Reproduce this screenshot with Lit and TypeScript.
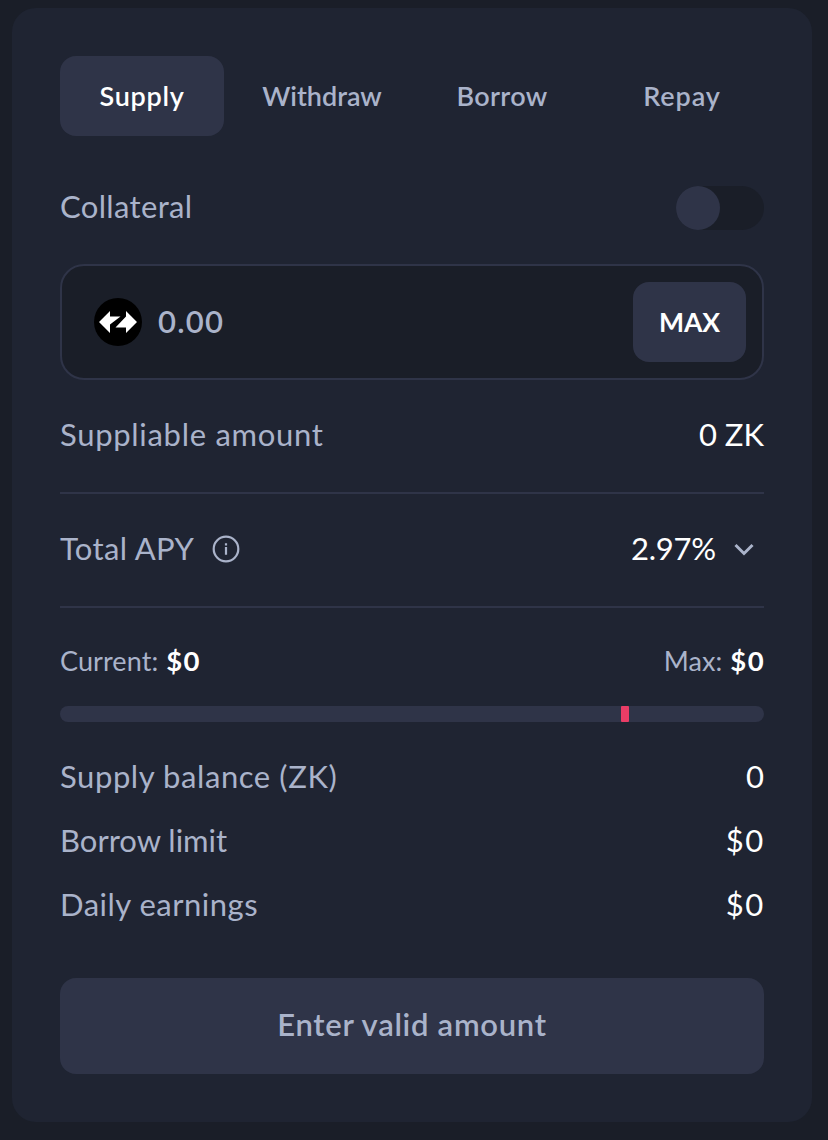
import { LitElement, html, css } from "lit";
import { customElement, state } from "lit/decorators.js";
import { classMap } from "lit/directives/class-map.js";

@customElement("app-root")
export class AppRoot extends LitElement {
  @state() private tab = "Supply";

  private tabs = [
    { name: "Supply", spacing: "wider" },
    { name: "Withdraw", spacing: "normal" },
    { name: "Borrow", spacing: "wide" },
    { name: "Repay", spacing: "widest" },
  ];

  static styles = css`
    :host {
      display: block;
      box-sizing: border-box;
      height: 1140px;
      padding: 8px 16px 18px 12px;
      background: #1a1e28;
      color: #fff;
      font-family: Lato, "Open Sans", sans-serif;
      font-size: 31px;
      line-height: 40px;
    }
    * { box-sizing: border-box; }
    button { font: inherit; color: inherit; border: 0; padding: 0; margin: 0; }
    .normal { letter-spacing: 0; }
    .wide { letter-spacing: 0.35px; }
    .medium { letter-spacing: 0.5px; }
    .wider { letter-spacing: 0.7px; }
    .widest { letter-spacing: 0.9px; }
    .card { height: 1114px; padding: 48px; border-radius: 24px; background: #1f2432; }
    .tabs { display: grid; grid-template-columns: repeat(4, 1fr); gap: 16px; }
    .tab { height: 80px; border-radius: 16px; background: none; color: #aab3ca; font-size: 27px; font-weight: 600; }
    .tab.active { background: #2f3448; color: #fff; }
    .row { display: flex; align-items: center; justify-content: space-between; white-space: nowrap; }
    .label { color: #aab3ca; }
    .collateral { height: 44px; margin-top: 50px; }
    .collateral .label { padding-bottom: 4px; }
    .toggle { width: 88px; height: 44px; border-radius: 22px; background: #1a1e28; }
    .knob { width: 44px; height: 44px; border-radius: 50%; background: #2f3448; }
    .field { display: flex; align-items: center; height: 116px; margin-top: 34px; padding: 0 16px 0 32px; border: 2px solid #2f3448; border-radius: 24px; background: #1a1e28; }
    .token { width: 48px; height: 48px; }
    .amount { flex: 1; margin-left: 16px; padding-bottom: 2px; color: #aab3ca; font-weight: 600; letter-spacing: 1.2px; }
    .max { width: 113px; height: 80px; border-radius: 16px; background: #2f3448; font-size: 26.500px; font-weight: 700; }
    .suppliable { height: 112px; padding-bottom: 4px; }
    .apy { height: 116px; padding-bottom: 4px; border: solid #2f3448; border-width: 2px 0; }
    .percent { letter-spacing: -0.2px; }
    .group { display: flex; align-items: center; }
    .info { width: 28px; height: 28px; margin: 2px 0 0 18px; }
    .chevron { width: 20px; height: 13px; margin: 2px 10px 0 18px; }
    .limits { height: 40px; margin-top: 33px; padding-bottom: 1px; font-size: 27px; }
    .limits .label { letter-spacing: 0.1px; }
    .limits b { margin: 0 -1px 0 1px; font-size: 27.500px; font-weight: 700; letter-spacing: 1.4px; }
    .bar { display: flex; height: 16px; margin-top: 25px; padding-left: 561px; border-radius: 8px; background: #2f3448; }
    .mark { width: 8px; height: 16px; border-radius: 1px; background: #e93d66; }
    .stats { display: grid; grid-auto-rows: 64px; margin-top: 22px; }
    .balance { letter-spacing: 0.58px; }
    .money { margin-right: -0.8px; letter-spacing: 1.6px; }
    .submit { display: block; width: 100%; height: 96px; margin-top: 42px; padding-bottom: 4px; border-radius: 16px; background: #2f3448; color: #aab3ca; font-weight: 600; }
  `;

  render() {
    return html`
      <main class="card">
        <nav class="tabs">
          ${this.tabs.map(
            (t) => html`<button class=${classMap({ tab: true, active: t.name === this.tab })} @click=${() => (this.tab = t.name)}><span class=${t.spacing}>${t.name}</span></button>`
          )}
        </nav>
        <div class="row collateral">
          <span class="label wide">Collateral</span>
          <div class="toggle"><div class="knob"></div></div>
        </div>
        <div class="field">
          <svg class="token" viewBox="0 0 48 48">
            <circle cx="24" cy="24" r="24" fill="#000" />
            <path fill="#fff" d="M5 24 16 13v5.400h10.500L16 26.500V35ZM43 24 32 13v5.500L21.500 29.500H32V35Z" />
          </svg>
          <span class="amount">0.00</span>
          <button class="max"><span>MAX</span></button>
        </div>
        <div class="row suppliable"><span class="label wider">Suppliable amount</span><span>0 ZK</span></div>
        <div class="row apy">
          <div class="group">
            <span class="label wide">Total APY</span>
            <svg class="info" viewBox="0 0 28 28" fill="none" stroke="#aab3ca" stroke-width="2.200">
              <circle cx="14" cy="14" r="12.300" />
              <path d="M14 12v7.800M14 8.200v2.200" />
            </svg>
          </div>
          <div class="group">
            <span class="percent">2.97%</span>
            <svg class="chevron" viewBox="0 0 20 13" fill="none" stroke="#aab3ca" stroke-width="3">
              <path d="m1.500 2 8.500 8.500L18.500 2" />
            </svg>
          </div>
        </div>
        <div class="row limits">
          <span><span class="label">Current:</span> <b>$0</b></span>
          <span><span class="label">Max:</span> <b>$0</b></span>
        </div>
        <div class="bar"><div class="mark"></div></div>
        <div class="stats">
          <div class="row"><span class="label balance">Supply balance (ZK)</span><span>0</span></div>
          <div class="row"><span class="label">Borrow limit</span><span class="money">$0</span></div>
          <div class="row"><span class="label medium">Daily earnings</span><span class="money">$0</span></div>
        </div>
        <button class="submit"><span class="wider">Enter valid amount</span></button>
      </main>
    `;
  }
}
